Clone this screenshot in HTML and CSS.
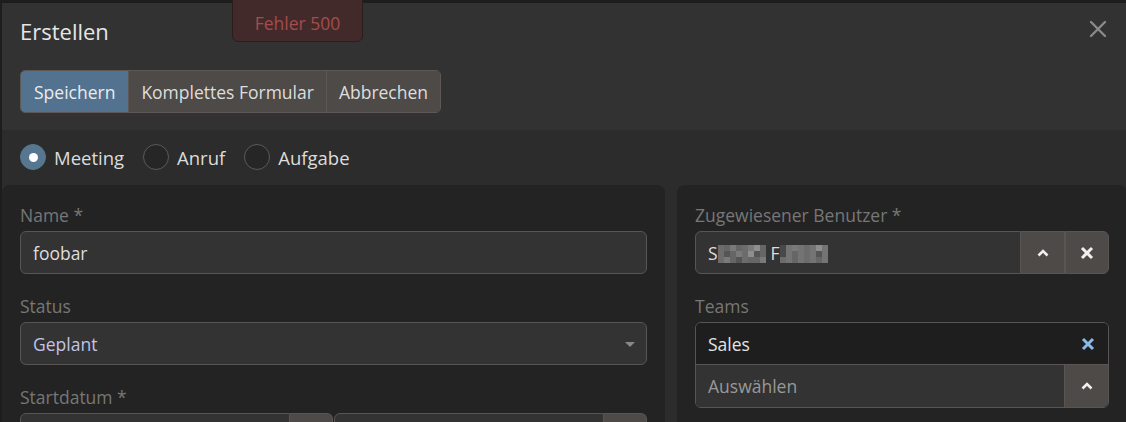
FILE: index.html
```html
<!DOCTYPE html>
<html lang="de">
<head>
<meta charset="utf-8">
<title>Erstellen</title>
<link rel="stylesheet" href="styles.css">
</head>
<body>
<div class="modal">
  <div class="alert">Fehler 500</div>
  <button class="close" aria-label="Schließen">
    <svg width="18" height="18" viewBox="0 0 18 18"><path d="M2 2 L16 16 M16 2 L2 16" stroke="#8a8a8a" stroke-width="2.4" stroke-linecap="round"/></svg>
  </button>
  <header class="modal-header">
    <h4 class="title">Erstellen</h4>
    <div class="btn-group">
      <button class="btn btn-primary">Speichern</button>
      <button class="btn">Komplettes Formular</button>
      <button class="btn">Abbrechen</button>
    </div>
  </header>
  <div class="modal-body">
    <div class="radios">
      <label class="radio"><span class="dot checked"></span>Meeting</label>
      <label class="radio"><span class="dot"></span>Anruf</label>
      <label class="radio"><span class="dot"></span>Aufgabe</label>
    </div>
    <div class="columns">
      <div class="panel">
        <div class="field">
          <div class="label">Name *</div>
          <div class="input">foobar</div>
        </div>
        <div class="field">
          <div class="label">Status</div>
          <div class="input select">Geplant<span class="caret"></span></div>
        </div>
        <div class="field">
          <div class="label">Startdatum *</div>
          <div class="date-row">
            <div class="input-group"><div class="input grow"></div><span class="addon"></span></div>
            <div class="input-group"><div class="input grow"></div><span class="addon"></span></div>
          </div>
        </div>
      </div>
      <div class="panel">
        <div class="field">
          <div class="label">Zugewiesener Benutzer *</div>
          <div class="input-group">
            <div class="input grow user">S<span class="pix p1"><i></i><i></i><i></i><i></i><i></i><i></i><i></i><i></i><i></i><i></i><i></i><i></i><i></i><i></i><i></i><i></i><i></i><i></i><i></i><i></i><i></i><i></i><i></i><i></i></span>F<span class="pix p2"><i></i><i></i><i></i><i></i><i></i><i></i><i></i><i></i><i></i><i></i><i></i><i></i><i></i><i></i><i></i><i></i><i></i><i></i><i></i><i></i><i></i><i></i><i></i><i></i></span></div>
            <span class="addon icon"><svg width="12" height="8" viewBox="0 0 12 8"><path d="M1.5 6.5 L6 2 L10.5 6.5" fill="none" stroke="#f0f0f0" stroke-width="2.6"/></svg></span>
            <span class="addon icon last"><svg width="14" height="14" viewBox="0 0 14 14"><path d="M2 2 L12 12 M12 2 L2 12" stroke="#f0f0f0" stroke-width="3"/></svg></span>
          </div>
        </div>
        <div class="field">
          <div class="label">Teams</div>
          <div class="multi">
            <div class="tag-row">Sales<svg width="14" height="14" viewBox="0 0 14 14"><path d="M2 2 L12 12 M12 2 L2 12" stroke="#8cb8e6" stroke-width="3"/></svg></div>
            <div class="pick-row">
              <span class="placeholder">Auswählen</span>
              <span class="addon icon"><svg width="12" height="8" viewBox="0 0 12 8"><path d="M1.5 6.5 L6 2 L10.5 6.5" fill="none" stroke="#f0f0f0" stroke-width="2.6"/></svg></span>
            </div>
          </div>
        </div>
      </div>
    </div>
  </div>
</div>
</body>
</html>
```
FILE: styles.css
```css
html, body {
  margin: 0;
  padding: 0;
  background: #1d1d1d;
  overflow: hidden;
  height: 422px;
}
body {
  font-family: "Open Sans", "Noto Sans", sans-serif;
  font-size: 17.5px;
  color: #dcdcdc;
}
.modal {
  position: relative;
  margin: 3px 0 0 2px;
  width: 1140px;
  background: #323232;
  min-height: 430px;
}
.alert {
  position: absolute;
  left: 230px;
  top: -4px;
  width: 131px;
  height: 43px;
  box-sizing: border-box;
  padding-top: 4px;
  background: #432a2a;
  border: 1px solid #2c1c1c;
  border-radius: 0 0 6px 6px;
  color: #a54c4c;
  font-size: 17.5px;
  display: flex;
  align-items: center;
  justify-content: center;
}
.close {
  position: absolute;
  left: 1087px;
  top: 17px;
  padding: 0;
  border: 0;
  background: none;
  width: 18px;
  height: 18px;
}
.modal-header {
  padding: 14px 18px 17px;
}
.title {
  margin: 0;
  font-size: 22px;
  font-weight: 400;
  line-height: 28px;
  color: #e6e6e6;
}
.btn-group {
  display: inline-flex;
  margin-top: 25px;
  border: 1px solid #5d5856;
  border-radius: 5px;
  overflow: hidden;
}
.btn {
  font-family: inherit;
  font-size: 17.5px;
  height: 41px;
  padding: 0 12px;
  border: 0;
  border-left: 1px solid #5d5856;
  background: #4e4a48;
  color: #dedede;
}
.btn-primary {
  border-left: 0;
  background: #52728f;
  color: #ececec;
  padding: 0 13px;
}
.modal-body {
  background: #2c2c2c;
  padding-top: 14px;
}
.radios {
  display: flex;
  align-items: center;
  gap: 19px;
  padding: 0 18px;
  height: 26px;
  margin-bottom: 15px;
  font-size: 18.5px;
}
.radio {
  display: flex;
  align-items: center;
  gap: 8px;
  color: #dcdcdc;
}
.dot {
  width: 24px;
  height: 24px;
  border: 1px solid #5a5a5a;
  border-radius: 50%;
  box-sizing: content-box;
  background: #262626;
}
.dot.checked {
  background: #56778f;
  border-color: #56778f;
  position: relative;
}
.dot.checked::after {
  content: "";
  position: absolute;
  left: 8px;
  top: 8px;
  width: 9px;
  height: 9px;
  border-radius: 50%;
  background: #fff;
}
.columns {
  display: grid;
  grid-template-columns: 663px 450px;
  gap: 12px;
}
.panel {
  background: #232323;
  border-radius: 8px 8px 0 0;
  padding: 19px 18px 0;
  min-height: 240px;
}
.field {
  margin-bottom: 21px;
}
.label {
  line-height: 22px;
  color: #777;
  margin-bottom: 5px;
}
.input {
  height: 41px;
  border: 1px solid #5a5555;
  border-radius: 6px;
  background: #333;
  display: flex;
  align-items: center;
  padding: 0 12px;
  color: #dedede;
  position: relative;
}
.select {
  color: #c4c3e6;
}
.caret {
  position: absolute;
  right: 11px;
  top: 19px;
  width: 0;
  height: 0;
  border-left: 5px solid transparent;
  border-right: 5px solid transparent;
  border-top: 5px solid #888;
}
.date-row {
  display: flex;
  gap: 1px;
}
.input-group {
  display: flex;
  flex: 1;
}
.input-group .input {
  border-radius: 6px 0 0 6px;
}
.grow {
  flex: 1;
}
.addon {
  width: 42px;
  height: 43px;
  box-sizing: border-box;
  background: #4e4a48;
  border: 1px solid #5a5555;
  border-left: 0;
  border-radius: 0 6px 6px 0;
}
.date-row .addon {
  width: 43px;
}
.addon.icon {
  display: flex;
  align-items: center;
  justify-content: center;
  width: 44px;
  border-radius: 0;
}
.addon.icon.last {
  border-left: 1px solid #5a5555;
  border-radius: 0 6px 6px 0;
}
.user {
  padding-left: 12px;
}
.pix {
  display: inline-grid;
  grid-template-columns: repeat(8, 6px);
  grid-auto-rows: 6px;
  margin: 2px 5px 0 0;
}
.pix.p1 {
  margin-left: 0;
}
.pix i {
  background: #666;
}
.pix i:nth-child(3n) { background: #7a7a7a; }
.pix i:nth-child(5n) { background: #555; }
.pix i:nth-child(7n) { background: #8e8e8e; }
.pix i:nth-child(4n+1) { background: #6c6c6c; }
.p2 i:nth-child(2n) { background: #747474; }
.p2 i:nth-child(1), .p2 i:nth-child(9) { background: #484848; }
.multi {
  border: 1px solid #5a5555;
  border-radius: 6px;
  overflow: hidden;
}
.tag-row {
  height: 41px;
  background: #1e1e1e;
  display: flex;
  align-items: center;
  justify-content: space-between;
  padding: 0 13px 0 12px;
  border-bottom: 1px solid #5a5555;
  color: #e4e4e4;
}
.pick-row {
  display: flex;
  height: 42px;
  background: #333;
}
.placeholder {
  flex: 1;
  display: flex;
  align-items: center;
  padding-left: 12px;
  color: #999;
}
.pick-row .addon.icon {
  height: 42px;
  border: 0;
  border-left: 1px solid #5a5555;
}
```
